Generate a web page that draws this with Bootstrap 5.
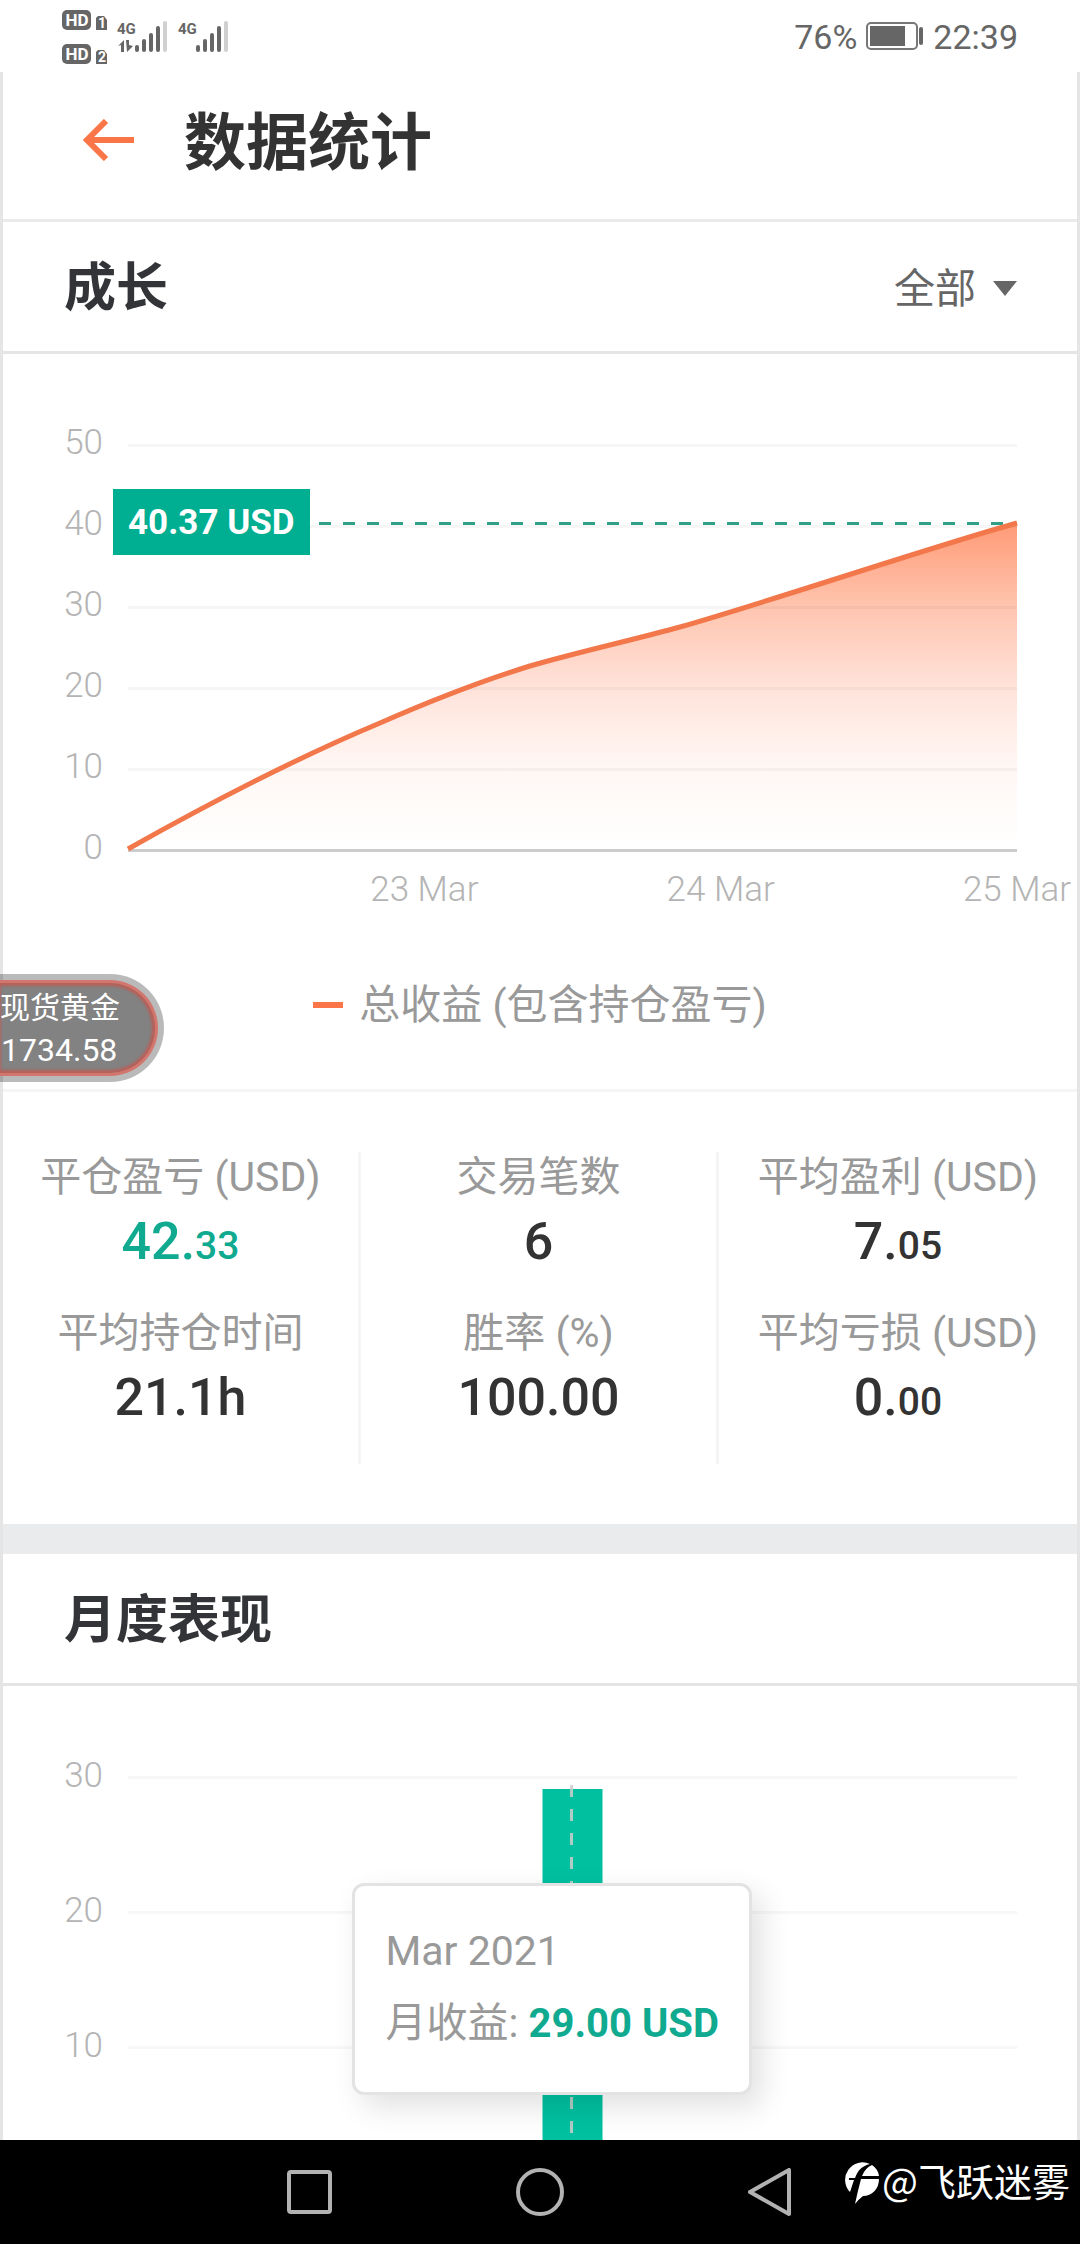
<!DOCTYPE html>
<html lang="zh-CN">
<head>
<meta charset="utf-8">
<meta name="viewport" content="width=device-width, initial-scale=1">
<title>数据统计</title>
<link href="https://cdn.jsdelivr.net/npm/bootstrap@5.3.0/dist/css/bootstrap.min.css" rel="stylesheet">
<style>
  :root {
    --edge: #e5e5e5;
    --hair: #f3f5f6;
    --accent: #fa7548;
    --teal: #00ae91;
    --ink: #333;
  }
  body { font-family: Roboto, "Noto Sans CJK SC", sans-serif; color: var(--ink); background: #fff; }
  svg { display: block; flex: none; }
  svg text { font-family: Roboto, sans-serif; font-weight: 700; }

  .status-bar { height: 72px; padding: 2px 62px 0; color: #666; font-size: 34px; line-height: 40px; }
  .status-bar svg { margin-top: -2px; }
  .app-body { border: solid var(--edge); border-width: 0 3px; min-height: 0; }

  .app-header { height: 150px; padding: 0 79px 8px; gap: 50px; border-bottom: 3px solid #ebebeb; }
  .app-header svg { margin-bottom: 4px; }
  .app-title { padding-top: 5px; font-size: 62px; line-height: 80px; font-weight: 700; }
  .icon-btn { background: none; border: 0; padding: 0; }

  .section-head { height: 132px; padding: 4px 60px 0 61px; border-bottom: 3px solid var(--edge); }
  .section-name { font-size: 52px; line-height: 64px; font-weight: 700; color: #333437; }
  .range-pick { gap: 17px; color: #666; font-size: 41px; line-height: 56px; }
  .range-pick select { appearance: none; border: 0; background: none; padding: 0; color: inherit; font: inherit; }

  .chart-row { padding-right: 60px; }
  .y-axis { width: 100px; margin: 48px 25px 0 0; text-align: right; color: #b4b4b4; font-size: 35px; font-weight: 300; line-height: 81px; }
  .plot-area { flex: 1 1 0; min-width: 0; padding-top: 90px; }
  .plot-area svg { width: 100%; overflow: visible; }
  .x-axis { margin-top: 17px; color: #b4b4b4; font-size: 35px; font-weight: 300; line-height: 42px; }
  .x-axis span { width: 0; display: flex; justify-content: center; white-space: nowrap; }
  .value-flag { left: -15px; top: 135px; padding: 1px 15px 0; background: var(--teal); color: #fff; font-size: 35px; line-height: 65px; font-weight: 700; }
  .growth-legend { gap: 16px; padding: 66px 0 56px; border-bottom: 3px solid var(--hair); color: #999; font-size: 41px; line-height: 56px; }
  .legend-dash { width: 30px; height: 6px; background: var(--accent); }

  .stats { padding: 60px 0; }
  .stat-col { border-right: 3px solid var(--hair); text-align: center; }
  .stat-col:last-child { border-right: 0; }
  .stat-cell { height: 156px; }
  .stat-name { color: #999; font-size: 41px; line-height: 50px; white-space: nowrap; }
  .stat-value { margin-top: 8px; font-size: 52px; line-height: 64px; font-weight: 500; }
  .stat-value span { font-size: 39px; }
  .gain { color: #10aa90; }
  .band { height: 30px; background: #eaebed; }

  .month-axis { margin-top: 22px; line-height: 135px; }
  .month-plot svg { height: 364px; }
  .month-tip { left: calc(50% - 221px); top: 197px; width: 400px; height: 212px; padding: 29px 0 0 31px; background: #fff; border: 3px solid #e3e3e3; border-radius: 12px; box-shadow: 10px 12px 30px rgba(0, 0, 0, .12); color: #999; font-size: 41px; line-height: 72px; white-space: nowrap; }
  .month-tip strong { font-size: 40px; }

  .quote-pill { left: 0; top: 974px; width: 164px; height: 108px; padding: 13px 0 0; border-radius: 0 54px 54px 0; background: rgba(0, 0, 0, .27); color: #fff; }
  .quote-pill::before { content: ""; position: absolute; inset: 6px 6px 6px 0; border: solid #d3766e; border-width: 3px 3px 3px 0; border-radius: 0 48px 48px 0; background: #828282; box-shadow: inset -3px 0 3px #b7615a, inset 0 3px 3px #b7615a, inset 0 -3px 3px #b7615a; }
  .quote-pill div { position: relative; line-height: 42px; }
  .quote-name { font-size: 30px; }
  .quote-price { font-size: 32px; padding-left: 1px; }

  .nav-keys { height: 104px; background: #000; }
  .nav-keys button { width: 230px; padding: 28px 0; display: flex; justify-content: center; align-items: flex-start; }
  .watermark { right: 10px; top: 12px; gap: 2px; color: #fff; font-family: "Noto Sans CJK SC", sans-serif; font-size: 38px; line-height: 56px; }
  .watermark svg { margin-top: 6px; }
</style>
</head>
<body class="vh-100 overflow-hidden d-flex flex-column position-relative">

<div class="status-bar d-flex align-items-center justify-content-between flex-shrink-0">
  <svg width="168" height="72" viewBox="62 0 168 72" fill="#666">
    <rect x="62" y="10" width="29" height="20" rx="5"/>
    <rect x="62" y="44" width="29" height="20" rx="5"/>
    <path d="M96 30V18l2-2h6l3 4v10zM96 64V52l2-2h6l3 4v10z"/>
    <g fill="#fff" font-size="17" text-anchor="middle">
      <text x="77" y="26">HD</text><text x="77" y="60">HD</text>
      <text x="102" y="28" font-size="14">1</text><text x="102" y="62" font-size="14">2</text>
    </g>
    <text x="117" y="34" font-size="15">4G</text>
    <text x="178" y="34" font-size="15">4G</text>
    <path d="M118 46l6-6v12h-3v-7zM126 40h3v5l4 1-6 6z"/>
    <g stroke="#666" stroke-width="4" stroke-linecap="round">
      <path d="M137 47v3M144 41v9M151 35v15M158 28v22M198 47v3M205 41v9M212 35v15M219 28v22"/>
      <path d="M165 23v27M226 23v27" stroke="#d0d0d0"/>
    </g>
  </svg>
  <div class="d-flex align-items-center">
    <span>76%</span>
    <svg class="mx-2" width="60" height="30" viewBox="0 0 60 30" fill="#666">
      <rect x="2" y="2" width="50" height="26" rx="4" fill="none" stroke="#777" stroke-width="2"/>
      <rect x="5" y="5" width="35" height="20"/>
      <rect x="54" y="6" width="4" height="18" rx="2"/>
    </svg>
    <span>22:39</span>
  </div>
</div>

<main class="app-body flex-grow-1 overflow-hidden">
  <header class="app-header d-flex align-items-center">
    <button class="icon-btn" type="button" aria-label="返回">
      <svg width="52" height="42" viewBox="0 0 52 42" fill="none" stroke="#fa7548" stroke-width="6"><path d="M52 21H7M24 2L5 21l19 19"/></svg>
    </button>
    <h1 class="app-title m-0">数据统计</h1>
  </header>

  <section>
    <div class="section-head d-flex align-items-center justify-content-between">
      <h2 class="section-name m-0">成长</h2>
      <label class="range-pick d-flex align-items-center">
        <select aria-label="时间范围"><option>全部</option></select>
        <svg width="24" height="15" viewBox="0 0 24 15"><path d="M0 0h24L12 15z" fill="#666"/></svg>
      </label>
    </div>

    <div class="chart-row d-flex">
      <div class="y-axis"><div>50</div><div>40</div><div>30</div><div>20</div><div>10</div><div>0</div></div>
      <div class="plot-area position-relative">
        <svg height="408" viewBox="0 0 889 408" preserveAspectRatio="none">
          <defs>
            <linearGradient id="fade" x1="0" y1="0" x2="0" y2="1">
              <stop offset="0" stop-color="#ff9a76"/>
              <stop offset=".26" stop-color="#ffc5b0"/>
              <stop offset=".5" stop-color="#ffe2d9"/>
              <stop offset=".75" stop-color="#fff7f4"/>
              <stop offset="1" stop-color="#fff"/>
            </linearGradient>
          </defs>
          <path d="M0 405C80 360 166 315 252 279C300 258 350 238 402 222C450 208 505 196 552 183C640 158 800 104 889 79V405z" fill="url(#fade)"/>
          <path d="M0 1.500H889M0 82.500H889M0 163.500H889M0 244.500H889M0 325.500H889" stroke="#000" stroke-opacity=".035" stroke-width="3"/>
          <path d="M0 406.500H889" stroke="#ccc" stroke-width="3"/>
          <path d="M191 79.500H889" stroke="#2f9f88" stroke-width="3" stroke-dasharray="12 12"/>
          <path d="M0 405C80 360 166 315 252 279C300 258 350 238 402 222C450 208 505 196 552 183C640 158 800 104 889 79" fill="none" stroke="#f2774b" stroke-width="5"/>
        </svg>
        <div class="value-flag position-absolute">40.37 USD</div>
        <div class="x-axis d-flex justify-content-between"><span></span><span>23 Mar</span><span>24 Mar</span><span>25 Mar</span></div>
      </div>
    </div>

    <div class="growth-legend d-flex align-items-center justify-content-center">
      <span class="legend-dash"></span><span>总收益 (包含持仓盈亏)</span>
    </div>

    <div class="stats row g-0">
      <div class="stat-col col-4">
        <div class="stat-cell"><div class="stat-name">平仓盈亏 (USD)</div><div class="stat-value gain">42.<span>33</span></div></div>
        <div class="stat-cell"><div class="stat-name">平均持仓时间</div><div class="stat-value">21.1h</div></div>
      </div>
      <div class="stat-col col-4">
        <div class="stat-cell"><div class="stat-name">交易笔数</div><div class="stat-value">6</div></div>
        <div class="stat-cell"><div class="stat-name">胜率 (%)</div><div class="stat-value">100.00</div></div>
      </div>
      <div class="stat-col col-4">
        <div class="stat-cell"><div class="stat-name">平均盈利 (USD)</div><div class="stat-value">7.<span>05</span></div></div>
        <div class="stat-cell"><div class="stat-name">平均亏损 (USD)</div><div class="stat-value">0.<span>00</span></div></div>
      </div>
    </div>
  </section>

  <div class="band"></div>

  <section>
    <div class="section-head d-flex align-items-center">
      <h2 class="section-name m-0">月度表现</h2>
    </div>
    <div class="chart-row d-flex">
      <div class="y-axis month-axis"><div>30</div><div>20</div><div>10</div></div>
      <div class="plot-area month-plot position-relative">
        <svg>
          <clipPath id="plotClip"><rect width="100%" height="364"/></clipPath>
          <path d="M0 1.500H3000M0 136.500H3000M0 271.500H3000" stroke="#f7f7f7" stroke-width="3" clip-path="url(#plotClip)"/>
          <rect x="50%" y="13" width="60" height="351" fill="#00c0a0" transform="translate(-30)"/>
          <line x1="50%" x2="50%" y1="9" y2="364" stroke="#ccc" stroke-opacity=".85" stroke-width="3" stroke-dasharray="12 12" transform="translate(-1)"/>
        </svg>
        <div class="month-tip position-absolute">
          <div>Mar 2021</div>
          <div>月收益: <strong class="gain">29.00 USD</strong></div>
        </div>
      </div>
    </div>
  </section>
</main>

<div class="quote-pill position-absolute">
  <div class="quote-name">现货黄金</div>
  <div class="quote-price">1734.58</div>
</div>

<nav class="nav-keys d-flex justify-content-center flex-shrink-0 position-relative">
  <button class="icon-btn" type="button" aria-label="最近任务">
    <svg width="48" height="48" viewBox="0 0 48 48" fill="none" stroke="#b2b2b2" stroke-width="4"><rect x="3" y="4" width="41" height="40" rx="2"/></svg>
  </button>
  <button class="icon-btn" type="button" aria-label="主页">
    <svg width="48" height="48" viewBox="0 0 48 48" fill="none" stroke="#b2b2b2" stroke-width="4"><circle cx="24" cy="24" r="22"/></svg>
  </button>
  <button class="icon-btn" type="button" aria-label="返回上一页">
    <svg width="48" height="48" viewBox="0 0 48 48" fill="none" stroke="#b2b2b2" stroke-width="4" stroke-linejoin="round"><path d="M43 2v44L4 24z"/></svg>
  </button>
  <div class="watermark position-absolute d-flex align-items-center">
    <svg width="36" height="42" viewBox="0 0 36 42">
      <path d="M26 2A17.500 17.500 0 0 0 6 30L10 18H5V16H11C14 8 18 4 26 2z" fill="#fff"/>
      <path d="M28 3Q21 6 18 14H35Q34 7 28 3zM17 17H35C35 27 28 34 19 34Q15 37 11 42Q14 28 17 17z" fill="#fff"/>
    </svg>
    <span>@飞跃迷雾</span>
  </div>
</nav>

<script src="https://cdn.jsdelivr.net/npm/bootstrap@5.3.0/dist/js/bootstrap.bundle.min.js"></script>
</body>
</html>
